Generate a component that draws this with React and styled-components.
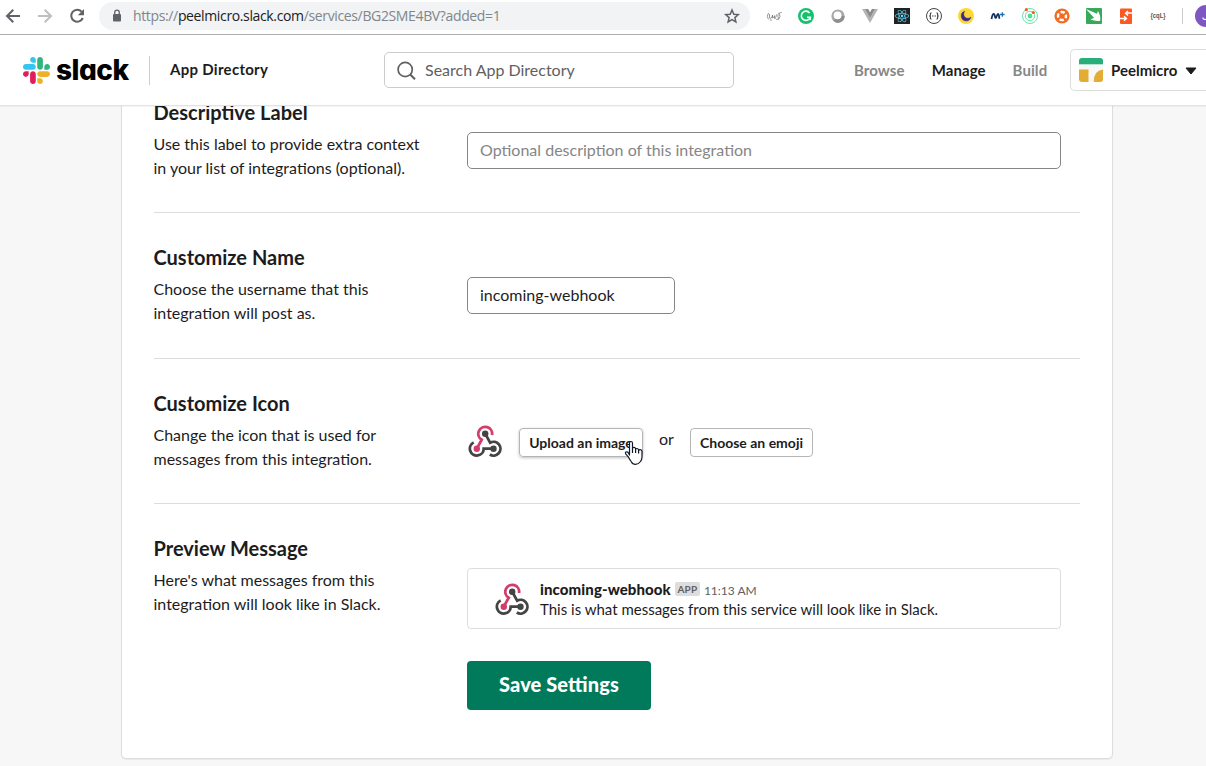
import React from 'react';
import styled, { createGlobalStyle } from 'styled-components';
import { FaReact } from 'react-icons/fa';

const GlobalStyle = createGlobalStyle`
  * { box-sizing: border-box; }
  body {
    margin: 0;
    overflow: hidden;
    background: #f7f7f7;
    color: #1d1c1d;
    font-family: Lato, "Liberation Sans", sans-serif;
    font-feature-settings: "liga" 1;
  }
`;

const Page = styled.div`
  display: flex;
  flex-direction: column;
  width: 1206px;
  height: 766px;
  overflow: hidden;
`;

/* ---------- Browser toolbar ---------- */

const BrowserBar = styled.div`
  display: flex;
  align-items: center;
  flex: 0 0 35px;
  padding: 0 0 3px 5px;
  background: #fff;
  border-bottom: 1px solid #adadad;
`;

const NavIcons = styled.div`
  display: flex;
  flex: none;
  gap: 16px;
  width: 94px;
  svg { display: block; }
`;

const AddressBar = styled.div`
  display: flex;
  align-items: center;
  flex: none;
  width: 651px;
  height: 28px;
  margin-top: 1px;
  padding: 0 10px 0 12px;
  border-radius: 14px;
  background: #f1f3f4;
`;

const Url = styled.div`
  flex: 1;
  margin-left: 10px;
  font: 14px/20px "Open Sans", sans-serif;
  letter-spacing: -0.36px;
  color: #80868b;
  white-space: nowrap;
  b { font-weight: 400; color: #202124; }
`;

const Extensions = styled.div`
  display: flex;
  flex: none;
  gap: 16px;
  margin-left: 16px;
  svg { display: block; flex: none; }
`;

const ExtensionText = styled.text`
  font: 700 7px "Liberation Sans", sans-serif;
  text-anchor: middle;
  fill: #555;
`;

const BarDivider = styled.div`
  flex: none;
  width: 1px;
  height: 16px;
  margin: 0 12px 0 16px;
  background: #c9cbce;
`;

const Profile = styled.div`
  flex: none;
  width: 22px;
  height: 22px;
  padding-left: 7px;
  border-radius: 50%;
  background: #7e57c2;
  color: #fff;
  font: 12px/22px Roboto, sans-serif;
`;

/* ---------- Site header ---------- */

const Header = styled.header`
  position: relative;
  display: flex;
  align-items: center;
  flex: 0 0 71px;
  padding-left: 23px;
  background: #fff;
  border-bottom: 1px solid #e3e3e3;
  box-shadow: 0 1px 1px rgba(0, 0, 0, 0.04);
  white-space: nowrap;
  > * { flex: none; }
`;

const Wordmark = styled.div`
  width: 93px;
  margin-left: 6px;
  font: 800 28px/34px Inter, sans-serif;
  font-feature-settings: "cv11" 1;
  letter-spacing: -0.5px;
  color: #000;
`;

const SectionTitle = styled.div`
  width: 235px;
  height: 29px;
  padding-left: 20px;
  border-left: 1px solid #ccc;
  font-size: 15px;
  font-weight: 700;
  letter-spacing: 0.29px;
  line-height: 27px;
`;

const Search = styled.div`
  display: flex;
  align-items: center;
  width: 350px;
  height: 36px;
  padding-left: 12px;
  gap: 9px;
  border: 1px solid #ccc;
  border-radius: 5px;
  color: #616061;
  font-size: 16px;
  line-height: 20px;
`;

const Nav = styled.nav`
  display: flex;
  gap: 27px;
  width: 215px;
  margin-left: 120px;
  font-size: 15px;
  font-weight: 700;
  letter-spacing: 0.08px;
`;

const NavItem = styled.span`
  color: ${(p) => (p.$active ? '#1d1c1d' : '#868686')};
`;

const Workspace = styled.div`
  display: flex;
  align-items: center;
  width: 136px;
  height: 42px;
  margin-left: 1px;
  padding-left: 8px;
  gap: 8px;
  border: 1px solid #ddd;
  border-right: 0;
  border-radius: 5px 0 0 5px;
  font-size: 15px;
  font-weight: 700;
  svg:last-child { margin-top: 2px; }
`;

/* ---------- Settings panel ---------- */

const Main = styled.main`
  flex: 1;
  overflow: hidden;
`;

const Panel = styled.div`
  width: 992px;
  height: 692px;
  margin: -39px 0 0 121px;
  padding: 0 32px;
  background: #fff;
  border: 1px solid #ddd;
  border-radius: 5px;
  box-shadow: 0 1px 1px rgba(0, 0, 0, 0.06);
`;

const Setting = styled.section`
  display: flex;
  height: ${(p) => p.$height}px;
  border-bottom: ${(p) => (p.$last ? '0' : '1px solid #ddd')};
`;

const Label = styled.div`
  width: 313px;
  padding-top: 32px;
`;

const Heading = styled.h2`
  margin: 0 0 0 -0.5px;
  font-size: 20px;
  font-weight: 700;
  line-height: 24px;
`;

const Help = styled.p`
  margin: 8px 0 0 -0.5px;
  font-size: 16px;
  line-height: 24px;
  white-space: nowrap;
`;

const Control = styled.div`
  width: 594px;
  padding-top: ${(p) => p.$top}px;
`;

const Field = styled.div`
  width: ${(p) => p.$width}px;
  height: 37px;
  padding-left: 12px;
  border: 1px solid #868686;
  border-radius: 5px;
  font-size: 16px;
  line-height: 33px;
  color: ${(p) => (p.$placeholder ? '#868686' : '#1d1c1d')};
`;

const IconRow = styled.div`
  display: flex;
  align-items: center;
  gap: 17px;
  padding-left: 1px;
`;

const SmallButton = styled.div`
  position: relative;
  width: ${(p) => p.$width}px;
  height: 29px;
  margin-top: 3px;
  border: 1px solid #b5b5b5;
  border-radius: 4px;
  box-shadow: ${(p) => (p.$hover ? '0 1px 3px rgba(0,0,0,.25)' : 'none')};
  font-size: 14px;
  font-weight: 700;
  line-height: 28px;
  text-align: center;
  white-space: nowrap;
`;

const Or = styled.span`
  width: 14px;
  margin-left: -1px;
  padding-bottom: 6px;
  font-size: 16px;
`;

const Cursor = styled.svg`
  position: absolute;
  left: 104px;
  top: 11px;
`;

const Message = styled.div`
  display: flex;
  width: 594px;
  height: 61px;
  padding: 10px 0 0 27px;
  border: 1px solid #ddd;
  border-radius: 4px;
  svg { margin-top: 4px; }
`;

const MessageBody = styled.div`
  margin-left: 11px;
  font-size: 15px;
  line-height: 20px;
  white-space: nowrap;
`;

const MessageHead = styled.div`
  display: flex;
  align-items: center;
  height: 20px;
  b { font-weight: 900; letter-spacing: 0.09px; }
`;

const AppBadge = styled.span`
  height: 14px;
  width: 25px;
  margin: -1px 4px 0 4px;
  border-radius: 2px;
  background: #ddd;
  color: #616061;
  font-size: 10px;
  font-weight: 700;
  line-height: 14px;
  letter-spacing: 0.1px;
  text-align: center;
`;

const Time = styled.span`
  color: #616061;
  font-size: 12px;
  padding-top: 3px;
`;

const SaveButton = styled.div`
  width: 184px;
  height: 49px;
  margin-top: 32px;
  border-radius: 4px;
  background: #007a5a;
  color: #fff;
  font-size: 20px;
  font-weight: 900;
  letter-spacing: 0.1px;
  line-height: 47px;
  text-align: center;
`;

/* ---------- Drawings ---------- */

const SlackMark = () => (
  <svg width="27" height="27" viewBox="0 0 122.8 122.8">
    <path fill="#e01e5a" d="M25.8 77.6c0 7.1-5.8 12.9-12.9 12.9S0 84.7 0 77.6s5.8-12.9 12.9-12.9h12.9v12.9zm6.5 0c0-7.1 5.8-12.9 12.9-12.9s12.9 5.8 12.9 12.9v32.3c0 7.1-5.8 12.9-12.9 12.9s-12.9-5.8-12.9-12.9V77.6z" />
    <path fill="#36c5f0" d="M45.2 25.8c-7.1 0-12.9-5.8-12.9-12.9S38.1 0 45.2 0s12.9 5.8 12.9 12.9v12.9H45.2zm0 6.5c7.1 0 12.9 5.8 12.9 12.9s-5.8 12.9-12.9 12.9H12.9C5.8 58.1 0 52.3 0 45.2s5.8-12.9 12.9-12.9h32.3z" />
    <path fill="#2eb67d" d="M97 45.2c0-7.1 5.8-12.9 12.9-12.9s12.9 5.8 12.9 12.9-5.8 12.9-12.9 12.9H97V45.2zm-6.5 0c0 7.1-5.8 12.9-12.9 12.9s-12.9-5.8-12.9-12.9V12.9C64.7 5.8 70.5 0 77.6 0s12.9 5.8 12.9 12.9v32.3z" />
    <path fill="#ecb22e" d="M77.6 97c7.1 0 12.9 5.8 12.9 12.9s-5.8 12.9-12.9 12.9-12.9-5.8-12.9-12.9V97h12.9zm0-6.5c-7.1 0-12.9-5.8-12.9-12.9s5.8-12.9 12.9-12.9h32.3c7.1 0 12.9 5.8 12.9 12.9s-5.8 12.9-12.9 12.9H77.6z" />
  </svg>
);

const WebhookIcon = () => (
  <svg width="34" height="32" viewBox="-0.5 0 34 32" fill="none" strokeWidth="2.8">
    <path stroke="#444" d="M5.2 17.5A6.9 6.9 0 1 0 15.2 23.7H25" />
    <path stroke="#444" d="M16.7 8.7L21.6 17.7A6.9 6.9 0 1 1 21.3 29.5" />
    <path stroke="#d43d6b" d="M8.3 23.7L13.2 14.7A6.9 6.9 0 1 1 23.5 10" />
    <circle cx="16.7" cy="8.7" r="3.2" fill="#444" stroke="none" />
    <circle cx="25" cy="23.7" r="3.2" fill="#444" stroke="none" />
    <circle cx="8.3" cy="23.7" r="3.2" fill="#d43d6b" stroke="none" />
  </svg>
);

const BrowserNavIcons = () => (
  <NavIcons>
    <svg width="16" height="16" viewBox="0 0 16 16" fill="none" stroke="#5f6368" strokeWidth="2">
      <path d="M15 8H2.5M8.3 1.7L2 8l6.3 6.3" />
    </svg>
    <svg width="16" height="16" viewBox="0 0 16 16" fill="none" stroke="#bdbfc1" strokeWidth="2">
      <path d="M1 8h12.500M7.700 1.700L14 8l-6.300 6.300" />
    </svg>
    <svg width="16" height="16" viewBox="0 0 16 16" fill="none">
      <path stroke="#5f6368" strokeWidth="2" d="M12.700 3.700A6 6 0 1 0 13.800 10" />
      <path fill="#5f6368" d="M15 1v6.200H8.800z" />
    </svg>
  </NavIcons>
);

const ExtensionIcons = () => (
  <Extensions>
    <svg width="16" height="16" viewBox="0 0 16 16">
      <g fill="none" stroke="#7b7b7b" strokeWidth=".8">
        <path d="M2.500 5Q0 8.500 2.500 11.500M13.500 5Q11 5 12.500 11Q10 12.500 9.500 10.500M15.700 4.500Q12.500 4 14 8.500Q13.500 11 12 11.500" />
        <path d="M3.500 6v4q1.500 1 2.500-1l.5-2v3q1.500 0 2-2.500M8.500 8v2.500q1.500 0 2-4M4 12h2" />
      </g>
    </svg>
    <svg width="16" height="16" viewBox="0 0 16 16">
      <circle cx="8" cy="8" r="8" fill="#15c26b" />
      <path d="M11.600 5A4.600 4.600 0 1 0 12.300 9.200H9M12.300 9.200V12" fill="none" stroke="#fff" strokeWidth="1.600" />
    </svg>
    <svg width="16" height="16" viewBox="0 0 16 16">
      <circle cx="8" cy="8" r="6.600" fill="#a9a9a9" />
      <path d="M3 12.500A6.600 6.600 0 0 0 14.600 8L12 7.500z" fill="#8e8e8e" />
      <circle cx="7.600" cy="7.300" r="3.900" fill="#fff" />
    </svg>
    <svg width="16" height="16" viewBox="0 0 16 16">
      <path d="M0 1h16L8 15z" fill="#b4b4b4" />
      <path d="M3.200 1h3L8 4.200 9.800 1h3L8 9.500z" fill="#8b8b8b" />
      <path d="M6.200 1h3.600L8 4.200z" fill="#fff" />
    </svg>
    <svg width="16" height="16" viewBox="0 0 16 16">
      <rect width="16" height="16" fill="#222" />
      <FaReact x="1" y="1" size={14} color="#61dafb" />
    </svg>
    <svg width="16" height="16" viewBox="0 0 16 16" fill="none" stroke="#444">
      <circle cx="8" cy="8" r="7.500" />
      <path d="M5.500 4.800Q4.200 4.800 4.400 6.500Q4.500 8 3.300 8Q4.500 8 4.400 9.500Q4.200 11.200 5.500 11.200M10.500 4.800Q11.800 4.800 11.600 6.500Q11.500 8 12.700 8Q11.500 8 11.600 9.500Q11.800 11.200 10.500 11.200" strokeWidth="1.200" />
      <path d="M6 8h4" strokeDasharray="1 .5" />
    </svg>
    <svg width="16" height="16" viewBox="0 0 16 16">
      <circle cx="8" cy="8" r="8" fill="#fdd835" />
      <path d="M6.800 3.300A4.900 4.900 0 1 0 12.900 9A3.600 3.600 0 0 1 6.800 3.300z" fill="#3f2a86" stroke="#3f2a86" strokeWidth=".5" />
    </svg>
    <svg width="16" height="16" viewBox="0 0 16 16" fill="none" stroke="#12305c">
      <path d="M1.500 11Q2.300 6.500 3.400 6Q4.600 5.800 5.100 9.200Q5.800 10.800 6.600 8.500Q7.500 5.800 8.200 6Q9.200 6.500 9.300 10.800" strokeWidth="1.800" />
      <path d="M12.300 4.200v4.600M10 6.500h4.600" strokeWidth="1.300" stroke="#1c6fb0" />
    </svg>
    <svg width="16" height="16" viewBox="0 0 16 16" fill="none" stroke="#69e3a4">
      <circle cx="8" cy="8" r="7.500" strokeWidth="1" />
      <circle cx="8" cy="8" r="4.700" strokeWidth="1" />
      <circle cx="8" cy="8" r="2.400" fill="#4fe193" stroke="none" />
      <circle cx="4.300" cy="1.700" r="1.600" fill="#f15b2a" stroke="none" />
      <circle cx="11.300" cy="4.500" r="1.600" fill="#f15b2a" stroke="none" />
    </svg>
    <svg width="16" height="16" viewBox="0 0 16 16">
      <circle cx="8" cy="8" r="7.600" fill="#f26b21" />
      <circle cx="8" cy="8" r="4" fill="none" stroke="#fff" strokeWidth="2.400" strokeDasharray="4.300 1.983" strokeDashoffset="2" />
    </svg>
    <svg width="16" height="16" viewBox="0 0 16 16">
      <rect width="16" height="16" rx="1" fill="#38a85a" />
      <path d="M0 1L11 5.800 12 3Q15 8 14.200 12.800Q9 13.500 4.500 11.500L8 9.800Z" fill="#fff" />
    </svg>
    <svg width="16" height="16" viewBox="0 0 16 16">
      <rect x="2" y=".5" width="12" height="15.500" rx="1" fill="#ff5722" />
      <path d="M14 5H8.500M10 3L7.500 5.200 10 7.500M2 10.500h5.500M6 8.300l2.500 2.200L6 12.800" stroke="#fff" strokeWidth="1.400" fill="none" />
    </svg>
    <svg width="16" height="16" viewBox="0 0 16 16">
      <ExtensionText x="8" y="10.300" textLength="15" lengthAdjust="spacingAndGlyphs">{'{cqL}'}</ExtensionText>
    </svg>
  </Extensions>
);

const HandCursor = () => (
  <Cursor width="20" height="26" viewBox="0 0 20 26">
    <path
      d="M5.500 15V3.200Q5.500 1.500 7 1.500T8.500 3.200V8.500Q8.700 7.300 10 7.400T11.600 8.700V9.500Q12 8.400 13.100 8.500T14.600 9.800V10.500Q15 9.600 16.200 9.700T18 11.200V17Q18 19.500 16.500 21.500Q14.500 24.300 11.500 24.300T7.500 22Q5.500 19.500 4.300 16.800L1.700 13.800Q1 12.500 2 12T4 12.300Z"
      fill="#fff" stroke="#111827" strokeWidth="1.200" strokeLinejoin="round"
    />
    <path d="M8.500 8.500v4.500M11.600 9.500v3.500M14.600 10.500v3" stroke="#111827" strokeWidth="1.200" />
  </Cursor>
);

const WorkspaceLogo = () => (
  <svg width="24" height="24" viewBox="0 0 24 24">
    <defs><clipPath id="ws"><rect width="24" height="24" rx="3" /></clipPath></defs>
    <g clipPath="url(#ws)">
      <rect width="24" height="24" fill="#f8f8f8" />
      <rect width="24" height="6.300" fill="#27ae7a" />
      <rect y="11.500" width="9.500" height="12.500" fill="#e3ac33" />
      <path d="M24 11.500V24H14.800Q14.500 12.500 24 11.500z" fill="#e3ac33" />
    </g>
  </svg>
);

/* ---------- Page ---------- */

export default function App() {
  return (
    <Page>
      <GlobalStyle />
      <BrowserBar>
        <BrowserNavIcons />
        <AddressBar>
          <svg width="12" height="14" viewBox="0 0 12 14">
            <rect x="2" y="5" width="8" height="7.500" rx="1" fill="#5f6368" />
            <path d="M3.700 5.500V3.500a2.300 2.300 0 0 1 4.600 0v2" fill="none" stroke="#5f6368" strokeWidth="1.300" />
          </svg>
          <Url>https://<b>peelmicro.slack.com</b>/services/BG2SME4BV?added=1</Url>
          <svg width="16" height="16" viewBox="0 0 16 16">
            <path d="M8 2l1.800 4.200 4.500.4-3.400 3 1 4.400L8 11.700 4.100 14l1-4.400-3.400-3 4.500-.4z" fill="none" stroke="#5f6368" strokeWidth="1.500" />
          </svg>
        </AddressBar>
        <ExtensionIcons />
        <BarDivider />
        <Profile>J</Profile>
      </BrowserBar>

      <Header>
        <SlackMark />
        <Wordmark>slack</Wordmark>
        <SectionTitle>App Directory</SectionTitle>
        <Search>
          <svg width="19" height="19" viewBox="0 0 19 19" fill="none" stroke="#616061" strokeWidth="1.700">
            <circle cx="8.200" cy="8.500" r="7.100" />
            <path d="M13.200 13.500L18 18.300" strokeWidth="2" />
          </svg>
          <span>Search App Directory</span>
        </Search>
        <Nav>
          <NavItem>Browse</NavItem>
          <NavItem $active>Manage</NavItem>
          <NavItem>Build</NavItem>
        </Nav>
        <Workspace>
          <WorkspaceLogo />
          Peelmicro
          <svg width="12" height="8" viewBox="0 0 12 8"><path d="M1 1h10L6 7z" fill="#1d1c1d" stroke="#1d1c1d" strokeLinejoin="round" /></svg>
        </Workspace>
      </Header>

      <Main>
        <Panel>
          <Setting $height={145}>
            <Label>
              <Heading>Descriptive Label</Heading>
              <Help>Use this label to provide extra context<br />in your list of integrations (optional).</Help>
            </Label>
            <Control $top={64}>
              <Field $width={594} $placeholder>Optional description of this integration</Field>
            </Control>
          </Setting>

          <Setting $height={146}>
            <Label>
              <Heading>Customize Name</Heading>
              <Help>Choose the username that this<br />integration will post as.</Help>
            </Label>
            <Control $top={64}>
              <Field $width={208}>incoming-webhook</Field>
            </Control>
          </Setting>

          <Setting $height={145}>
            <Label>
              <Heading>Customize Icon</Heading>
              <Help>Change the icon that is used for<br />messages from this integration.</Help>
            </Label>
            <Control $top={66}>
              <IconRow>
                <WebhookIcon />
                <SmallButton $width={124} $hover>Upload an image<HandCursor /></SmallButton>
                <Or>or</Or>
                <SmallButton $width={123}>Choose an emoji</SmallButton>
              </IconRow>
            </Control>
          </Setting>

          <Setting $height={254} $last>
            <Label>
              <Heading>Preview Message</Heading>
              <Help>Here's what messages from this<br />integration will look like in Slack.</Help>
            </Label>
            <Control $top={64}>
              <Message>
                <WebhookIcon />
                <MessageBody>
                  <MessageHead><b>incoming-webhook</b><AppBadge>APP</AppBadge><Time>11:13 AM</Time></MessageHead>
                  This is what messages from this service will look like in Slack.
                </MessageBody>
              </Message>
              <SaveButton>Save Settings</SaveButton>
            </Control>
          </Setting>
        </Panel>
      </Main>
    </Page>
  );
}
